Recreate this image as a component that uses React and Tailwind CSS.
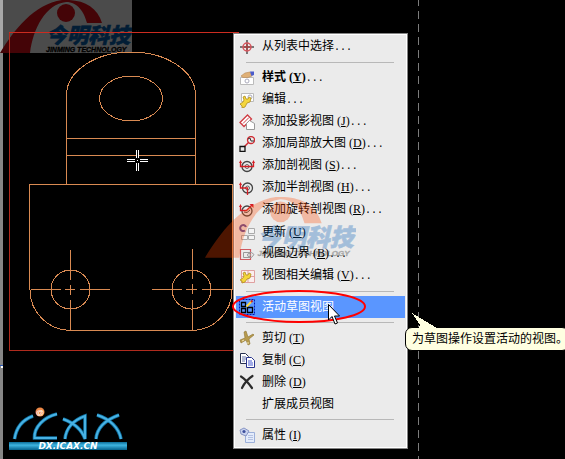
import clsx from "clsx";

const CJK = "font-['Liberation_Sans','Noto_Sans_CJK_SC',sans-serif]";
const CJK_SVG = { fontFamily: "'Noto Sans CJK SC', sans-serif" };

function Icon({ children }) {
  return <svg viewBox="0 0 16 16" className="h-4 w-4 shrink-0" fill="none" aria-hidden="true">{children}</svg>;
}

const icons = {
  pick: <Icon>
    <path d="M8 1v14M1 8h14" stroke="#777" strokeWidth="2" />
    <circle cx="8" cy="8" r="4" stroke="#d8545c" strokeWidth="1.5" />
    <path d="M8 5v6M5 8h6" stroke="#b33" />
  </Icon>,
  style: <Icon>
    <path d="M1.500 7.500h13v7h-13z" fill="#fff" stroke="#bbb" />
    <circle cx="8" cy="11" r="2" stroke="#aab" />
    <path d="M2 6l4-3 5-1 2 4-4 1.500-5 0z" fill="#dfb077" stroke="#b98a55" strokeWidth=".6" />
    <path d="M11 1.500h4v3.500l-2.500 1z" fill="#4a5ccc" />
  </Icon>,
  edit: <Icon>
    <path d="M2.500 1.500h12v8h-12z" fill="#fff" stroke="#bbb" />
    <circle cx="11" cy="5" r="2" stroke="#aab" />
    <path d="M1 12l3-2 1-2-1-3 2-1 1 3 2 0 1-2 2 1-1 4-3 1-2 4-3 1 0-2z" fill="#f4d63c" stroke="#b08e20" strokeWidth=".8" />
  </Icon>,
  projected: <Icon>
    <path d="M1 8.500L8.500 1l4 4L5 12.500z" fill="#fff" stroke="#cf3b42" strokeWidth="1.300" />
    <path d="M4 9.500l6-6" stroke="#cf3b42" />
    <path d="M7.500 9.500l3-3 5 3v6h-8z" fill="#fff" stroke="#999" />
  </Icon>,
  detail: <Icon>
    <circle cx="12" cy="4" r="3.500" stroke="#cf2b32" strokeWidth="1.300" />
    <path d="M9 3l2-1 1 3 3 0" stroke="#333" />
    <path d="M10 6l-5 5" stroke="#cf2b32" strokeWidth="1.500" />
    <path d="M1 10.500h5v5H1z" stroke="#111" strokeWidth="1.300" />
  </Icon>,
  section: <Icon>
    <circle cx="8" cy="8.500" r="5" stroke="#444" strokeWidth="1.300" />
    <circle cx="8" cy="8.500" r="2" stroke="#666" />
    <path d="M1.500 4v4.500h13V4" stroke="#d51f26" strokeWidth="1.300" />
    <path d="M0 5l1.500-3L3 5zM13 5l1.500-3L16 5z" fill="#d51f26" />
  </Icon>,
  half: <Icon>
    <circle cx="8.500" cy="8" r="5" stroke="#444" strokeWidth="1.300" />
    <circle cx="8.500" cy="8" r="2" stroke="#666" />
    <path d="M1.500 4v4h7v7" stroke="#d51f26" strokeWidth="1.300" />
    <path d="M0 5l1.500-3L3 5z" fill="#d51f26" />
  </Icon>,
  revolved: <Icon>
    <circle cx="8" cy="9" r="5" stroke="#444" strokeWidth="1.300" />
    <path d="M5 10q3 2 6-2" stroke="#444" />
    <path d="M1.500 4v4.500h6L13 3" stroke="#d51f26" strokeWidth="1.300" />
    <path d="M0 5l1.500-3L3 5zM10.500 2h4v4z" fill="#d51f26" />
  </Icon>,
  update: <Icon>
    <path d="M6 6.500a3 3 0 1 1 1-3.500" stroke="#5d4f9c" strokeWidth="2" />
    <path d="M9.500 4.500h6v5h-6zM2.500 11.500h6v4h-6zM9.500 11.500h6v4h-6z" fill="#f4f4f4" stroke="#aaa" />
  </Icon>,
  boundary: <Icon>
    <path d="M1.500 3.500h10v10h-10z" stroke="#cf5a60" strokeWidth="1.200" />
    <path d="M4.500 6.500h8l2.500 2-2.500 3h-8z" stroke="#999" />
    <circle cx="10" cy="9" r="1.500" stroke="#999" />
  </Icon>,
  related: <Icon>
    <path d="M2.500 2.500h13v12h-13zM2.500 8.500h13M9 2.500v12" fill="#fbeeee" stroke="#dfa0a0" />
    <path d="M1 12l3-2 1-2-1-3 2-1 1 3 2 0 1-2 2 1-1 4-3 1-2 3-3 1 0-2z" fill="#f4d63c" stroke="#b08e20" strokeWidth=".8" />
  </Icon>,
  sketch: <Icon>
    <path d="M.5.500h15v15H.5z" stroke="#0018b8" strokeDasharray="2 1" />
    <path d="M2.500 3.500h4v4h-4zM2.500 9.500h4v4h-4zM8.500 8.500h5v5h-5z" stroke="#000" strokeWidth="1.300" />
    <path d="M7.500 7.500l5-5" stroke="#ffd83c" strokeWidth="2" />
    <path d="M12 3l1.500-1.500" stroke="#c22" strokeWidth="2" />
  </Icon>,
  cut: <Icon>
    <path d="M7 1l2 6 5-3 1 1-5 4 1 5-2 1-2-5-5 3-1-3 5-2-1-6z" fill="#b79a4d" stroke="#8d7430" strokeWidth=".6" />
    <path d="M3 11l2-1M9 12v2" stroke="#f3e6b4" />
  </Icon>,
  copy: <Icon>
    <path d="M1.500 1.500h5l3 3v7h-8z" fill="#fff" stroke="#26304f" />
    <path d="M3 5h4M3 7h4M3 9h3" stroke="#6674a8" />
    <path d="M7.500 5.500h5l3 3v7h-8z" fill="#fff" stroke="#28348f" />
    <path d="M9 9h4M9 11h5M9 13h5" stroke="#4459d0" />
  </Icon>,
  remove: <Icon>
    <path d="M2 2.500q5 3 11 11.500M13.500 2Q7 6 3 14" stroke="#2b2b2b" strokeWidth="2.200" strokeLinecap="round" />
  </Icon>,
  properties: <Icon>
    <path d="M6.500 5.500h9v10h-9z" fill="#e4ecfb" stroke="#9cb0da" />
    <path d="M9 8.500h5M9 10.500h5M9 12.500h5" stroke="#b4c2e2" />
    <path d="M1 3l4-2 5 3-3 5-5-2z" fill="#c9d3ee" stroke="#8795c4" />
    <circle cx="5" cy="4.500" r="1.600" fill="#3d4f9c" />
  </Icon>,
};

const groups = [
  [{ icon: "pick", label: "从列表中选择", more: true }],
  [
    { icon: "style", label: "样式", shortcut: "Y", more: true, bold: true },
    { icon: "edit", label: "编辑", more: true },
    { icon: "projected", label: "添加投影视图", shortcut: "J", more: true },
    { icon: "detail", label: "添加局部放大图", shortcut: "D", more: true },
    { icon: "section", label: "添加剖视图", shortcut: "S", more: true },
    { icon: "half", label: "添加半剖视图", shortcut: "H", more: true },
    { icon: "revolved", label: "添加旋转剖视图", shortcut: "R", more: true },
    { icon: "update", label: "更新", shortcut: "U" },
    { icon: "boundary", label: "视图边界", shortcut: "B", more: true },
    { icon: "related", label: "视图相关编辑", shortcut: "V", more: true },
  ],
  [{ icon: "sketch", label: "活动草图视图", active: true }],
  [
    { icon: "cut", label: "剪切", shortcut: "T" },
    { icon: "copy", label: "复制", shortcut: "C" },
    { icon: "remove", label: "删除", shortcut: "D" },
    { label: "扩展成员视图" },
  ],
  [{ icon: "properties", label: "属性", shortcut: "I" }],
];

function MenuItem({ item }) {
  return (
    <button
      type="button"
      role="menuitem"
      className={clsx("flex h-[22px] w-full items-center gap-[7px] pl-[3px] text-left", item.active ? "bg-[#5a96ff] text-white" : "text-black")}
    >
      {item.icon ? icons[item.icon] : <span className="w-4 shrink-0" />}
      <span className="whitespace-nowrap">
        <span className={clsx(item.bold && "font-bold")}>
          {item.label}
          {item.shortcut && <span className="ml-[3px] font-['Liberation_Serif',serif]">(<u>{item.shortcut}</u>)</span>}
        </span>
        {item.more && <span className="font-['Liberation_Mono',monospace] text-[10px]">...</span>}
      </span>
    </button>
  );
}

function ContextMenu() {
  return (
    <div role="menu" className={clsx(CJK, "absolute left-[233px] top-[33px] w-[175px] border border-[#848484] bg-[#ebebeb] text-[12px] leading-4")}>
      <div className="border border-white p-px">
        {groups.map((group, i) => (
          <div key={i}>
            {i > 0 && <div role="separator" className="flex h-[9px] items-center pl-[10px] pr-[11px]"><div className="h-px w-full bg-[#b8b8b8]" /></div>}
            {group.map((item) => <MenuItem key={item.label} item={item} />)}
          </div>
        ))}
      </div>
    </div>
  );
}

function Drawing() {
  return (
    <svg width="565" height="459" className="absolute left-0 top-0" fill="none" shapeRendering="crispEdges" aria-hidden="true">
      <path d="M0 53h3v406H0z" fill="#868686" />
      <path d="M0 365h3v1H0z" fill="#2858b8" />
      <path d="M1 366h2v2H1z" fill="#fff" />
      <path d="M9.500 32v318.500h230" stroke="#b02b1e" />
      <path d="M9 32.500h230" stroke="#cc2c20" />
      <g stroke="#d98a52">
        <path d="M66.500 184V95a64.500 43 0 0 1 129 0v89M66.500 138.500h129M66.500 155.500h129" />
        <ellipse cx="131" cy="98.500" rx="31.500" ry="22.500" />
        <path d="M29.500 290V184.500h203V290M30 290A41 40.500 0 0 0 70.500 330.500H192A40.500 40.500 0 0 0 232 290" />
        <circle cx="70.500" cy="289.500" r="19.500" />
        <circle cx="191.500" cy="289.500" r="19.500" />
        <path d="M70.500 250v30M70.500 285v10M70.500 300v30M31 289.500h30M65 289.500h10M80 289.500h30" />
        <path d="M192.500 249v30M192.500 284v10M192.500 300v30M152 289.500h30M186 289.500h11M202 289.500h30" />
      </g>
      <path d="M136 150h3v8h-3zM136 163h3v8h-3z" fill="#000" />
      <path d="M136.500 150v8M138.500 150v8M136.500 163v8M138.500 163v8M127 159.500h8M127 161.500h8M140 159.500h8M140 161.500h8M137 160.500h1" stroke="#fff" />
      <path d="M418.500 -2V459" stroke="#7c7c7c" strokeDasharray="8 5.080" />
    </svg>
  );
}

function JinmingLogo({ arc, name, tagline, className }) {
  return (
    <svg viewBox="0 0 132 53" className={clsx("pointer-events-none absolute", className)} role="img" aria-label="今明科技">
      <path d="M0 53C14 30 34 4 62 0C82 -1 97 6 102 23H87C84 12 78 2 66 2C46 4 33 28 30 53z" fill={arc} />
      <circle cx="66" cy="13" r="9" fill={arc} />
      <text x="46" y="43" fontSize="21" fontWeight="900" fontStyle="italic" fill={name} stroke={name} strokeWidth=".6" style={CJK_SVG}>今明科技</text>
      <text x="46" y="52" fontSize="7" fontWeight="700" fontStyle="italic" fill={tagline} stroke={tagline} strokeWidth=".3" style={{ fontFamily: "'Liberation Sans', sans-serif" }}>JINMING TECHNOLOGY</text>
    </svg>
  );
}

function IcaxLogo() {
  return (
    <svg viewBox="0 0 120 44" className="absolute left-[8px] top-[407px] w-[120px]" fill="none" role="img" aria-label="ICAX">
      <defs>
        <linearGradient id="icax-bar" x1="0" y1="0" x2="0" y2="1">
          <stop offset="0" stopColor="#0b6c98" />
          <stop offset=".4" stopColor="#3fb4e0" />
          <stop offset="1" stopColor="#04618c" />
        </linearGradient>
      </defs>
      {[["#0e6f9e", 3.6], ["#48b2e4", 2]].map(([color, width]) => (
        <path
          key={color}
          d="M6.500 32C8 22 14 13 25 9M49 7C36 10 26 20 26.500 31H49M55 12C66 16 74 23 77 32V9C66 13 58 21 57 32M89 8C102 12 111 21 113 32M111 8C97 13 89 21 88 32"
          stroke={color}
          strokeWidth={width}
        />
      ))}
      <circle cx="32" cy="5" r="4.500" fill="#ef8a48" />
      <text x="32" y="7.500" fontSize="8" fontWeight="700" fontStyle="italic" textAnchor="middle" fill="#fff" style={{ fontFamily: "'Liberation Sans', sans-serif" }}>@</text>
      <rect x="1" y="35" width="118" height="8" fill="url(#icax-bar)" />
      <text x="60" y="42" fontSize="9" fontWeight="700" fontStyle="italic" textAnchor="middle" fill="#fff" style={{ fontFamily: "'DejaVu Sans', sans-serif" }}>DX.ICAX.CN</text>
    </svg>
  );
}

function Tooltip() {
  return (
    <div role="tooltip" className={clsx(CJK, "absolute left-[405px] top-[327px]")}>
      <div className="rounded-[7px] border border-black bg-[#ffffe1] px-1.5 py-[3px] text-[12px] leading-4 whitespace-nowrap text-black [font-feature-settings:'halt']">为草图操作设置活动的视图。</div>
      <svg viewBox="0 0 26 16" className="absolute -top-[14px] left-[7px] w-[26px]" shapeRendering="crispEdges" aria-hidden="true">
        <path d="M0 0L25 15H7L8 12z" fill="#ffffe1" />
      </svg>
    </div>
  );
}

export default function App() {
  return (
    <main className="relative min-h-screen w-full overflow-hidden bg-black">
      <div className="absolute left-0 top-0 h-[53px] w-[132px] border-l-3 border-[#a8a8a8] bg-[#4b4b4b]" />
      <JinmingLogo arc="#440407" name="#021d35" tagline="#000" className="left-0 top-0 w-[132px]" />
      <Drawing />
      <IcaxLogo />
      <ContextMenu />
      <JinmingLogo arc="#ff4800" name="#005ab4" tagline="#000" className="left-[205px] top-[197px] w-[151px] opacity-30" />
      <svg width="136" height="35" className="pointer-events-none absolute left-[231px] top-[289px]" fill="none" aria-hidden="true">
        <ellipse cx="68" cy="17.500" rx="66" ry="15.500" stroke="#f00" strokeWidth="2" />
      </svg>
      <svg viewBox="0 0 12 21" className="pointer-events-none absolute left-[328px] top-[304px] w-3" aria-hidden="true">
        <path d="M.5.500v15.500l3.500-3.500 3 7.500 2.500-1-3-7h5z" fill="#fff" stroke="#000" />
      </svg>
      <Tooltip />
    </main>
  );
}
